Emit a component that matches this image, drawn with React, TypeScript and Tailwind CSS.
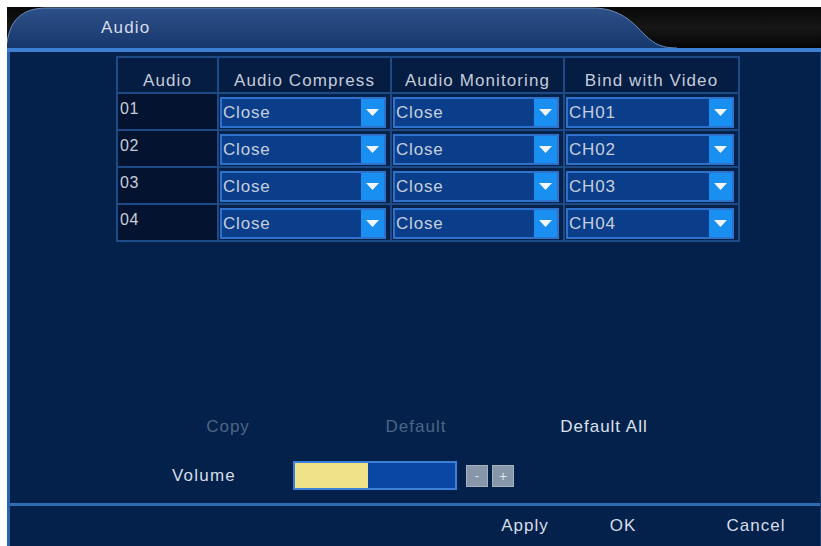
import React from "react";

const rows = [
  { id: "01", ch: "CH01" },
  { id: "02", ch: "CH02" },
  { id: "03", ch: "CH03" },
  { id: "04", ch: "CH04" },
];

function Select({ value }: { value: string }) {
  return (
    <div className="h-[31px] flex border-2 border-[#2f72cc] bg-[#0b3e8a]">
      <div className="flex-1 flex items-center pl-[1px] text-[17px] leading-[20px] tracking-[0.8px] text-[#c6cedc]">
        {value}
      </div>
      <div className="w-[23px] flex items-center justify-center bg-[#1a8ff2]">
        <svg width="13" height="8" viewBox="0 0 13 8">
          <path d="M0 0 L13 0 L6.5 7 Z" fill="#f2f6fc" />
        </svg>
      </div>
    </div>
  );
}

export default function App() {
  return (
    <div className="w-[821px] h-[546px] bg-white pt-[7px] pl-[7px] font-['Liberation_Sans',Arial,sans-serif] overflow-hidden">
      <div className="h-full flex flex-col">
        {/* title bar */}
        <div className="relative h-[41px] bg-[#0a0a0a]">
          <svg className="absolute inset-0" width="814" height="41" viewBox="0 0 814 41">
            <defs>
              <linearGradient id="tab" x1="0" y1="0" x2="0" y2="1">
                <stop offset="0" stopColor="#2d5088" />
                <stop offset="1" stopColor="#17386e" />
              </linearGradient>
              <linearGradient id="dark" x1="0" y1="0" x2="0" y2="1">
                <stop offset="0" stopColor="#080808" />
                <stop offset="0.5" stopColor="#171717" />
                <stop offset="1" stopColor="#050505" />
              </linearGradient>
            </defs>
            <rect x="0" y="0" width="814" height="41" fill="url(#dark)" />
            <path
              d="M0 41 L0 36 C3 14 14 1 40 1 L585 1 C614 1 626 16 638 28 C648 38 656 41 670 41 Z"
              fill="url(#tab)"
            />
            <path
              d="M0 36 C3 14 14 1 40 1 L585 1 C614 1 626 16 638 28 C648 38 656 41 670 41"
              fill="none"
              stroke="#6a8cbc"
              strokeWidth="1"
            />
          </svg>
          <div className="relative pl-[94px] pt-[11px] text-[17px] leading-[20px] tracking-[1.2px] text-[#d6dde9]">
            Audio
          </div>
        </div>
        <div className="h-[4px] bg-[#3d7fd2]" />

        {/* body */}
        <div className="flex-1 flex flex-col bg-[#03214a] border-l-[3px] border-[#2a62b2] border-r border-r-[#1c3f6e]">
          <div className="ml-[106px] mt-[4px] w-[624px] grid grid-cols-[99px_171px_171px_173px] gap-[2px] p-[2px] bg-[#1c4b87]">
            {["Audio", "Audio Compress", "Audio Monitoring", "Bind with Video"].map((h) => (
              <div
                key={h}
                className="h-[34px] flex items-end justify-center pb-[1px] bg-[#051d42] text-[17px] leading-[20px] tracking-[1.1px] text-[#c4ccdb]"
              >
                {h}
              </div>
            ))}
            {rows.map((r) => (
              <React.Fragment key={r.id}>
                <div className="h-[35px] bg-[#031330] pl-[2px] pt-[5px] text-[16px] leading-[20px] tracking-[0.5px] text-[#c6cedc]">
                  {r.id}
                </div>
                <div className="h-[35px] bg-[#06214a] pl-[1px] pr-[4px] pt-[3px]">
                  <Select value="Close" />
                </div>
                <div className="h-[35px] bg-[#06214a] pl-[1px] pr-[4px] pt-[3px]">
                  <Select value="Close" />
                </div>
                <div className="h-[35px] bg-[#06214a] pl-[1px] pr-[4px] pt-[3px]">
                  <Select value={r.ch} />
                </div>
              </React.Fragment>
            ))}
          </div>

          <div className="flex-1" />

          <div className="ml-[124px] flex h-[30px] items-center text-[17px] leading-[20px] tracking-[1px]">
            <div className="w-[188px] text-center text-[#4c6687]">Copy</div>
            <div className="w-[188px] text-center text-[#4c6687]">Default</div>
            <div className="w-[188px] text-center text-[#dbe1ec]">Default All</div>
          </div>

          <div className="mt-[19px] ml-[162px] flex items-center h-[29px]">
            <div className="w-[121px] text-[17px] leading-[20px] tracking-[1.2px] text-[#d6dde9]">Volume</div>
            <div className="w-[164px] h-[29px] border-2 border-[#3c80d8] flex">
              <div className="w-[73px] bg-[#efe38a]" />
              <div className="flex-1 bg-[#0a47a4]" />
            </div>
            <div className="ml-[9px] w-[22px] h-[22px] bg-[#8796a8] border border-[#a6b0be] flex items-center justify-center text-[#dfe5ee] text-[13px] leading-none">
              -
            </div>
            <div className="ml-[4px] w-[22px] h-[22px] bg-[#8796a8] border border-[#a6b0be] flex items-center justify-center text-[#dfe5ee] text-[14px] leading-none">
              +
            </div>
          </div>

          <div className="mt-[13px] h-[3px] bg-[#2e6bb0]" />

          <div className="h-[40px] flex items-center text-[17px] leading-[20px] tracking-[1px] text-[#d6dde9]">
            <div className="ml-[466px] w-[98px] text-center">Apply</div>
            <div className="w-[98px] text-center">OK</div>
            <div className="ml-[28px] w-[112px] text-center">Cancel</div>
          </div>
        </div>
      </div>
    </div>
  );
}
